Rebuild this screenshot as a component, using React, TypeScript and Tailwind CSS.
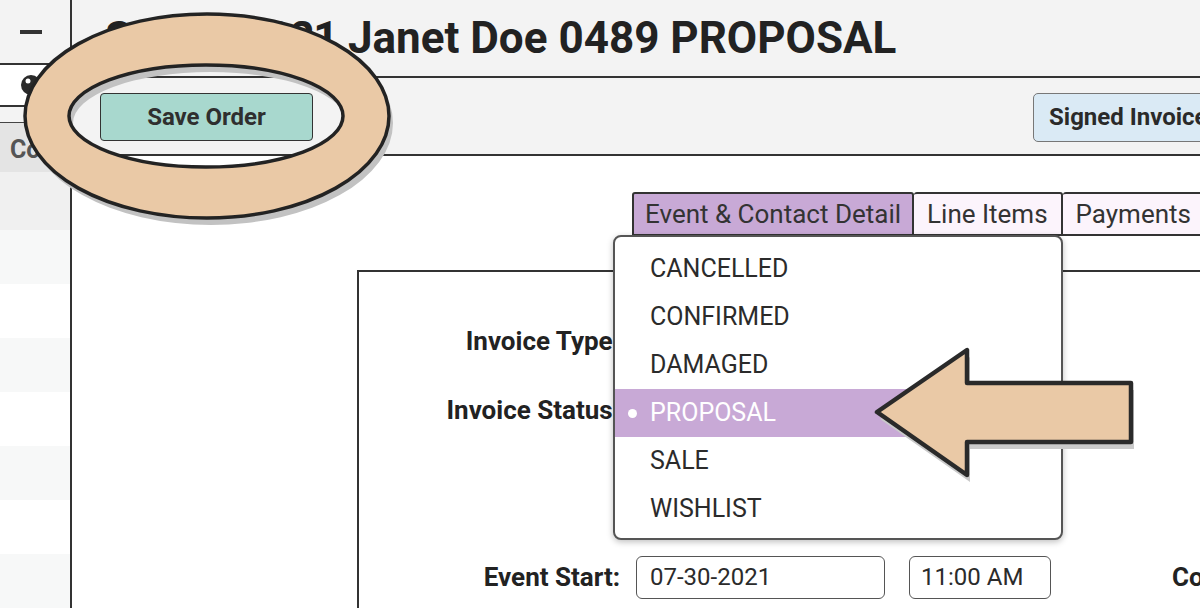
import React from 'react';

const statuses = ['CANCELLED', 'CONFIRMED', 'DAMAGED', 'PROPOSAL', 'SALE', 'WISHLIST'];
const selected = 'PROPOSAL';

const sideRows = ['bg-[#f0f0f0] h-[58px]', 'bg-[#f7f8f8]', 'bg-white', 'bg-[#f7f8f8]', 'bg-white', 'bg-[#f7f8f8]', 'bg-white', 'bg-[#f7f8f8]'];

const Sidebar = () => (
  <aside className="flex w-[72px] shrink-0 flex-col border-r-2 border-[#333] bg-white">
    <div className="flex h-[63px] items-center bg-[#f3f3f3] pl-[20px]">
      <div className="h-[4px] w-[22px] bg-[#333]" />
    </div>
    <div className="h-[44px] bg-[#f3f3f3]">
      <div className="flex h-full w-[60px] items-center rounded-r-[6px] border-y-2 border-r-2 border-[#333] bg-white pl-[20px]">
        <svg width="22" height="22" viewBox="0 0 22 22">
          <circle cx="11" cy="11" r="10" fill="#2a2a2a" />
          <circle cx="8" cy="7" r="2.5" fill="#fff" />
        </svg>
      </div>
    </div>
    <div className="h-[15px] bg-[#f3f3f3]" />
    <div className="flex h-[50px] items-center overflow-hidden whitespace-nowrap border-t border-[#444] bg-[#e4e4e4] pl-[10px] pt-[4px] text-[25px] font-bold text-[#555]">
      Contact
    </div>
    {sideRows.map((c, i) => (
      <div key={i} className={`shrink-0 ${c.includes('h-[') ? c : `${c} h-[54px]`}`} />
    ))}
  </aside>
);

const Tab = ({ label, active, first }: { label: string; active?: boolean; first?: boolean }) => (
  <div
    className={`flex h-[44px] shrink-0 items-center whitespace-nowrap rounded-t-[3px] border-y-2 border-r-2 border-[#333] text-[26px] text-[#333] ${first ? 'border-l-2 px-[11px]' : 'px-[13px]'} ${active ? 'bg-[#c8a9d6]' : 'bg-[#fcf4fc]'}`}
  >
    {label}
  </div>
);

const Field = ({ label, children, className = '' }: { label: string; children?: React.ReactNode; className?: string }) => (
  <div className={`flex h-[44px] items-center ${className}`}>
    <div className="w-[261px] shrink-0 whitespace-nowrap text-right text-[26px] font-bold text-[#222]">{label}</div>
    <div className="ml-[16px] flex items-center">{children}</div>
  </div>
);

const StatusMenu = () => (
  <div className="absolute left-[541px] top-[79px] w-[450px] rounded-[8px] border-2 border-[#555] bg-white pb-[5px] pt-[8px] shadow-[0_2px_6px_rgba(0,0,0,0.25)]">
    {statuses.map(s => (
      <div
        key={s}
        className={`flex h-[48px] items-center text-[25px] ${s === selected ? 'bg-[#c8a9d6] text-white' : 'text-[#2b2b2b]'}`}
      >
        <span className="flex w-[35px] shrink-0 justify-center">
          {s === selected && <span className="h-[9px] w-[9px] rounded-full bg-white" />}
        </span>
        {s}
      </div>
    ))}
  </div>
);

const Annotations = () => (
  <svg className="pointer-events-none absolute left-0 top-0" width="1200" height="608" viewBox="0 0 1200 608">
    <g transform="translate(4 7)">
      <path
        d="M25 116 a182 102 0 1 0 364 0 a182 102 0 1 0 -364 0 Z M69 116 a137 51 0 1 0 274 0 a137 51 0 1 0 -274 0 Z"
        fillRule="evenodd"
        fill="#c2c2c2"
      />
    </g>
    <path
      d="M25 116 a182 102 0 1 0 364 0 a182 102 0 1 0 -364 0 Z M69 116 a137 51 0 1 0 274 0 a137 51 0 1 0 -274 0 Z"
      fillRule="evenodd"
      fill="#eac9a6"
      stroke="#232323"
      strokeWidth="3.5"
    />
    <path d="M880 419 L970 357 L970 390 L1134 390 L1134 449 L970 449 L970 482 Z" fill="#cacaca" strokeLinejoin="round" />
    <path
      d="M877 412 L967 350 L967 383 L1131 383 L1131 442 L967 442 L967 475 Z"
      fill="#eac9a6"
      stroke="#2a2a2a"
      strokeWidth="4.5"
      strokeLinejoin="round"
    />
  </svg>
);

export default function App() {
  return (
    <div className="relative flex h-[608px] w-[1200px] overflow-hidden bg-white font-['Roboto',sans-serif] text-[#262626]">
      <Sidebar />
      <main className="flex min-w-0 flex-1 flex-col">
        <div className="flex h-[78px] shrink-0 items-center border-b-2 border-[#333] bg-[#f3f3f3] pl-[33px]">
          <h1 className="whitespace-nowrap text-[44px] font-bold leading-none text-[#222]">
            <span className="tracking-[-1.5px]">Sale 073021</span> Janet Doe 0489 PROPOSAL
          </h1>
        </div>
        <div className="flex h-[78px] shrink-0 items-center border-b-2 border-[#333] bg-[#f3f3f3] pl-[28px]">
          <button className="mt-[2px] h-[48px] w-[213px] shrink-0 rounded-[4px] border-[1.5px] border-[#333] bg-[#a8d8ce] text-[24px] font-bold text-[#2f2f2f]">
            Save Order
          </button>
          <button className="-mr-[40px] ml-auto mt-[2px] h-[49px] w-[207px] shrink-0 whitespace-nowrap rounded-[5px] border-[1.5px] border-[#777] bg-[#daeaf5] pl-[15px] text-left text-[24px] font-bold text-[#2a2a2a]">
            Signed Invoice
          </button>
        </div>
        <div className="relative flex min-h-0 flex-1 flex-col bg-white">
          <div className="mt-[36px] flex pl-[560px]">
            <Tab label="Event & Contact Detail" active first />
            <Tab label="Line Items" />
            <Tab label="Payments" />
            <Tab label="Documents" />
          </div>
          <div className="ml-[285px] mt-[34px] flex-1 border-l-2 border-t-2 border-[#333] pt-[47px]">
            <Field label="Invoice Type:">
              <div className="h-[43px] w-[250px] rounded-[6px] border-[1.5px] border-[#555]" />
            </Field>
            <Field label="Invoice Status:" className="mt-[25px]">
              <div className="h-[43px] w-[250px] rounded-[6px] border-[1.5px] border-[#555]" />
            </Field>
            <Field label="Event Start:" className="mt-[123px]">
              <div className="flex h-[43px] w-[249px] items-center rounded-[6px] border-[1.5px] border-[#555] px-[13px] text-[24px] text-[#2b2b2b]">07-30-2021</div>
              <div className="ml-[24px] flex h-[43px] w-[142px] items-center rounded-[6px] border-[1.5px] border-[#555] px-[11px] text-[24px] text-[#2b2b2b]">11:00 AM</div>
              <div className="ml-[121px] whitespace-nowrap text-[26px] font-bold text-[#222]">Contact:</div>
            </Field>
          </div>
          <StatusMenu />
        </div>
      </main>
      <Annotations />
    </div>
  );
}
